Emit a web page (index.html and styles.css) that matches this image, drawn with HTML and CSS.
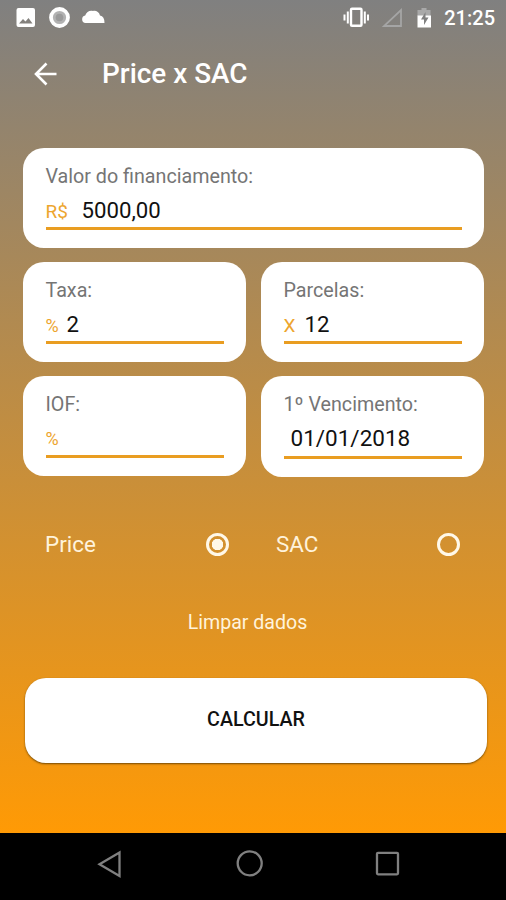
FILE: index.html
```html
<!DOCTYPE html>
<html lang="pt-BR">
<head>
    <meta charset="UTF-8">
    <meta name="viewport" content="width=device-width, initial-scale=1.0">
    <title>Price x SAC</title>
    <link rel="stylesheet" href="styles.css">
</head>
<body>
    <div class="app">
        <div class="status-bar">
            <svg width="110" height="36" viewBox="0 0 110 36">
                <path fill="#fff" fill-rule="evenodd" d="M18.500 8h14.500a2 2 0 0 1 2 2v15a2 2 0 0 1-2 2H18.500a2 2 0 0 1-2-2V10a2 2 0 0 1 2-2zM19 23.500h13.500l-4-5.500-3 3.500-2.500-2.500z"/>
                <circle cx="59.500" cy="17.500" r="8.500" fill="#b2b2b2" stroke="#fff" stroke-width="3.800"/>
                <circle cx="59.500" cy="17.500" r="3.800" fill="#9a9a9a"/>
                <path fill="#fff" d="M85.500 23a3.800 3.800 0 0 1-.3-7.500C86.500 11.500 90 10 93 11c2.500-.8 6 .5 7 4.500 3 .5 4.500 3 4.500 7.500z"/>
            </svg>
            <div class="status-right">
                <svg width="93" height="36" viewBox="339 0 93 36">
                    <rect x="351" y="8.800" width="10.500" height="17" rx="1" fill="none" stroke="#fff" stroke-width="2.400"/>
                    <path fill="none" stroke="#fff" stroke-width="2" d="M347.800 11.500v12M344.500 14.500v6M364.800 11.500v12M368 14.500v6"/>
                    <path fill="none" stroke="#a5a5a5" stroke-width="1.800" d="M401 10v16H384z"/>
                    <path fill="#a9a9a9" d="M417.500 10h4V8h5v2h4v6h-13z"/>
                    <path fill="#fff" d="M417.500 15.500h13.500V27.500h-13.500z"/>
                    <path fill="#808080" d="M425.500 12l-4.500 7.500h3V25l4.500-7.500h-3z"/>
                </svg>
                <span class="clock">21:25</span>
            </div>
        </div>

        <div class="toolbar">
            <svg width="24" height="24" viewBox="0 0 24 24" fill="none" stroke="#fff" stroke-width="2.600">
                <path d="M22.500 12H2.500M12.500 1.500L2 12L12.500 22.500"/>
            </svg>
            <h1>Price x SAC</h1>
        </div>

        <div class="form">
            <div class="card wide">
                <div class="label">Valor do financiamento:</div>
                <div class="field"><span class="prefix">R$</span><span class="value">5000,00</span></div>
            </div>
            <div class="card">
                <div class="label">Taxa:</div>
                <div class="field"><span class="prefix percent">%</span><span class="value">2</span></div>
            </div>
            <div class="card">
                <div class="label">Parcelas:</div>
                <div class="field"><span class="prefix times">X</span><span class="value">12</span></div>
            </div>
            <div class="card">
                <div class="label">IOF:</div>
                <div class="field"><span class="prefix percent">%</span></div>
            </div>
            <div class="card date">
                <div class="label">1º Vencimento:</div>
                <div class="field"><span class="value">01/01/2018</span></div>
            </div>
        </div>

        <div class="options">
            <div class="option"><span>Price</span><span class="radio checked"></span></div>
            <div class="option"><span>SAC</span><span class="radio"></span></div>
        </div>

        <div class="clear">Limpar dados</div>
        <button class="calculate">CALCULAR</button>
    </div>

    <div class="nav-bar">
        <svg width="506" height="67" viewBox="0 0 506 67" fill="none" stroke="#808080" stroke-width="2.300">
            <path d="M119.500 19.500v23.500L99.500 31.300z"/>
            <circle cx="249.700" cy="30.300" r="12"/>
            <rect x="377" y="19.800" width="21" height="21.500" rx="1"/>
        </svg>
    </div>
</body>
</html>
```

FILE: styles.css
```css
* {
    box-sizing: border-box;
}

body {
    margin: 0;
    background-color: #000;
    font-family: Roboto, sans-serif;
}

.app {
    height: 833px;
    background: linear-gradient(#808080, #ff9a05);
    overflow: hidden;
}

.status-bar {
    display: flex;
    justify-content: space-between;
    height: 36px;
    padding-right: 11px;
    color: #fff;
}

.status-right {
    display: flex;
    gap: 12px;
}

.clock {
    font-size: 20px;
    font-weight: 500;
    line-height: 37px;
}

.toolbar {
    display: flex;
    align-items: center;
    gap: 44px;
    height: 76px;
    padding-left: 34px;
}

h1 {
    margin: 0;
    padding-bottom: 2px;
    color: #fff;
    font-size: 27.9px;
    font-weight: 500;
}

.form {
    display: grid;
    grid-template-columns: 223px 223px;
    grid-auto-rows: 100px;
    gap: 14px 15px;
    margin: 36px 0 0 23px;
}

.card {
    padding: 16px 22.5px;
    background-color: #fff;
    border-radius: 21px;
}

.wide {
    grid-column: span 2;
}

.label {
    color: #757575;
    font-size: 19.7px;
    line-height: 26px;
}

.field {
    display: flex;
    align-items: baseline;
    height: 40px;
    border-bottom: 3px solid #e99d21;
    line-height: 40px;
}

.prefix {
    width: 36px;
    color: #eda52e;
    font-size: 19px;
}

.percent {
    width: 21px;
    font-size: 18px;
}

.times {
    width: 21px;
}

.value {
    color: #111;
    font-size: 22.2px;
}

/* no value here, so keep the sign on the same baseline */
.field .percent:only-child {
    line-height: 42px;
}

.date {
    height: 101px;
}

.date .field {
    height: 41px;
    padding-left: 7px;
}

.date .value {
    font-size: 22.5px;
}

.options {
    display: flex;
    gap: 47px;
    padding: 55px 46px 0 45px;
}

.option {
    display: flex;
    flex: 1;
    align-items: center;
    justify-content: space-between;
    color: #fff3dc;
    font-size: 22.4px;
}

.radio {
    width: 23px;
    height: 23px;
    border: 3px solid #fff8e8;
    border-radius: 50%;
}

.checked {
    background: radial-gradient(circle, #fff8e8 5.500px, transparent 6px);
}

.clear {
    margin-top: 54px;
    padding-right: 11px;
    color: #fff3dc;
    font-size: 19.6px;
    line-height: 24px;
    text-align: center;
}

.calculate {
    display: block;
    width: 462px;
    height: 85px;
    margin: 43px 0 0 25px;
    padding: 0 0 2px;
    border: none;
    border-radius: 21px;
    background-color: #fff;
    box-shadow: 0 1px 2px rgba(60, 40, 0, 0.7);
    color: #111;
    font-family: inherit;
    font-size: 19.7px;
    font-weight: 500;
}

.nav-bar {
    height: 67px;
}

.nav-bar svg {
    display: block;
}
```
